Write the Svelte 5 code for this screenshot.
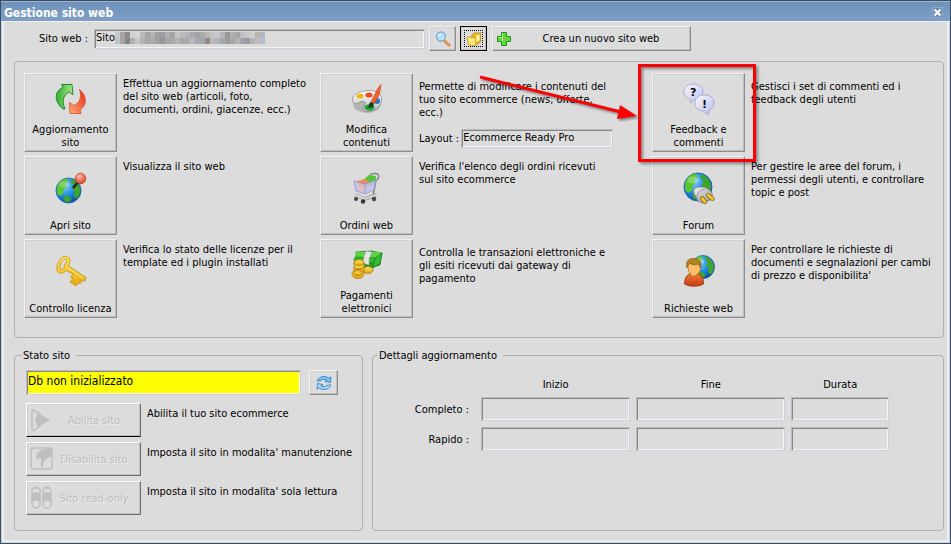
<script lang="ts">
  type Tile = { icon: string; label: string; text: string; low?: boolean; layout?: string; marked?: boolean };

  const tiles: Tile[] = [
    { icon: "sync", label: "Aggiornamento\nsito", text: "Effettua un aggiornamento completo\ndel sito web (articoli, foto,\ndocumenti, ordini, giacenze, ecc.)" },
    { icon: "palette", label: "Modifica\ncontenuti", text: "Permette di modificare i contenuti del\ntuo sito ecommerce (news, offerte,\necc.)", low: true, layout: "Ecommerce Ready Pro" },
    { icon: "chat", label: "Feedback e\ncommenti", text: "Gestisci i set di commenti ed i\nfeedback degli utenti", low: true, marked: true },
    { icon: "pin", label: "Apri sito", text: "Visualizza il sito web" },
    { icon: "cart", label: "Ordini web", text: "Verifica l'elenco degli ordini ricevuti\nsul sito ecommerce" },
    { icon: "plug", label: "Forum", text: "Per gestire le aree del forum, i\npermessi degli utenti, e controllare\ntopic e post" },
    { icon: "key", label: "Controllo licenza", text: "Verifica lo stato delle licenze per il\ntemplate ed i plugin installati" },
    { icon: "money", label: "Pagamenti\nelettronici", text: "Controlla le transazioni elettroniche e\ngli esiti ricevuti dai gateway di\npagamento", low: true },
    { icon: "user", label: "Richieste web", text: "Per controllare le richieste di\ndocumenti e segnalazioni per cambi\ndi prezzo e disponibilita'" },
  ];

  const modes = [
    { icon: "play", label: "Abilita sito", text: "Abilita il tuo sito ecommerce", current: true },
    { icon: "stop", label: "Disabilita sito", text: "Imposta il sito in modalita' manutenzione" },
    { icon: "lights", label: "Sito read-only", text: "Imposta il sito in modalita' sola lettura" },
  ];

  const columns = ["Inizio", "Fine", "Durata"];
  const updates = ["Completo", "Rapido"];

  // two rows of grey cells that hide the address
  const mosaic = [
    "c8c8ce aca49c 8c8c98 d0d0d0 d6d6d6 b8b8bc a4a4a4 b4b4b8 a0a0a0 9c9ca0 b0b0b4 a8a4a0 c4c4c4 bcbcbc b0b4b8 a8a8b0 a0a4a4 acaca8 b8b8b8 c4c4c4 c8c8cc b4b4b8 989898 b0b0b0 a4a8ac c0c0c4 c8c8c8 d0d0d0 b8b4a8 b0b4c4".split(" "),
    "c0c4c8 a8a4a0 84848c b0b0b0 c8c8cc b4b4b4 a4a8b0 b0a8a4 a0a0a0 98989c a4a4a8 a8a8a8 b4b4b8 a8a8a8 acaca4 b8b8c0 a8a8a8 a4a8b0 948c84 b8b8b8 b0b4b8 a8a8a8 9c9ca0 a8a8a8 b4b4b8 a0a4a8 9c9ca4 b4b4b4 c0c0c4 b8bcc4".split(" "),
  ];
</script>

{#snippet globe(cx: number, cy: number, r: number)}
  <g transform="translate({cx} {cy}) scale({r / 12})">
    <circle r="12" fill="url(#sea)" stroke="#1c5fae" stroke-width=".8" />
    <path fill="#5cc62f" d="M-11-4C-9-8-6-11-2-11.500L0-9-3-6-2-3-5-1-5 3-8 5-11 3z" />
    <path fill="#3fa52b" d="M3-11C8-9 11-5 11.400 0L10 5 8 8 5 5 6 1 3-2 5-5 2-8zM-5 6-1 5 3 8 1 11-4 10z" />
    <ellipse cx="-4" cy="-6" rx="5" ry="3" fill="#fff" opacity=".25" />
  </g>
{/snippet}

{#snippet picture(name: string)}
  <svg class="picture" viewBox="0 0 32 32" aria-hidden="true">
    {#if name === "sync"}
      <path fill="url(#leaf)" stroke="#23892a" d="M8 26C-1 19-1 8 8 4.500L6.500 1.500 17 1.500 18 12 14.500 9C9 11 6 17 10 26z" />
      <path fill="url(#ember)" stroke="#d9502c" stroke-width=".8" d="M24.500 6.500C32.500 13 32 22.500 25 27L26 30.500 15 30.500 14.500 19.500 18.500 22.500C25 20 27 14 24.500 6.500z" />
    {:else if name === "palette"}
      <ellipse cx="16" cy="21" rx="14" ry="9" fill="#8d8d8d" opacity=".5" />
      <path fill="url(#paper)" stroke="#8f8f8f" stroke-width=".8" d="M14 8C24 6 31 10 30.500 17 30 25 22 29 15 28.500 10 28 12 24 14 22 16 19 12 17 8 19.500 4 22 1 20 1.500 16 2 11 8 8.500 14 8z" />
      <ellipse cx="9" cy="13" rx="3.500" ry="2.600" fill="#f0b712" />
      <ellipse cx="18" cy="12" rx="3.600" ry="2.500" fill="#ef4b22" />
      <ellipse cx="26" cy="18" rx="3" ry="3" fill="#247ad1" />
      <ellipse cx="18.500" cy="24.500" rx="5" ry="3.200" fill="#21a530" />
      <path fill="#193c20" d="M17 25 19 19 23 20 22 24z" />
      <path fill="#f2622a" stroke="#bd3d14" stroke-width=".6" d="M20 19 27 5 30 1.500 28.500 11 24 20z" />
    {:else if name === "chat"}
      <g fill="url(#lilac)" stroke="#9c9fd0" stroke-width=".8">
        <path d="M10 1C16 1 20 4 20 9 20 13.500 16 16.500 11 16.500L8 20 7 16C3 14.500 1 12 1 9 1 4 5 1 10 1z" />
        <path d="M21 12C27 12 31 15 31 20 31 23 29 26 26 27L25.500 31.500 20 28C15 27.500 12 24 12 20 12 15 16 12 21 12z" />
      </g>
      <text x="7" y="13" class="glyph">?</text>
      <text x="19" y="25" class="glyph">!</text>
    {:else if name === "pin"}
      {@render globe(13.500, 18.500, 12.500)}
      <path stroke="#222" stroke-width="2.500" d="m18 16 6-7" />
      <circle cx="25.500" cy="6.500" r="5.300" fill="url(#ball)" stroke="#b13a22" stroke-width=".7" />
    {:else if name === "cart"}
      <path fill="none" stroke="#858585" stroke-width="1.500" d="m24 9 3-2q2-5-2-5.500Q20 1 19 3M25 8 22 24" />
      <path fill="#55c53b" d="m12 8 6-5 7 1v8l-9 3z" />
      <path fill="#f28b55" d="m6 9 8-2 5 3-3 6-9-2z" />
      <path fill="#c1c2ec" fill-opacity=".85" stroke="#8f91c8" stroke-width=".8" d="m3 9 11 3 11-4-2 10-9 4-9-3z" />
      <path fill="#f5b8a8" fill-opacity=".7" d="m7 12 6 2-1 6-5-2z" />
      <path stroke="#9294ca" stroke-width=".8" d="m14 12v9" fill="none" />
      <path stroke="#8b8b8b" stroke-width="3.500" d="m4 23 10 4 11-4" fill="none" />
      <path stroke="#ddd" stroke-width="2" d="m4 23 10 4 11-4" fill="none" />
      <circle cx="5" cy="27" r="2" fill="#444" /><circle cx="12" cy="29.500" r="2.200" fill="#333" /><circle cx="23" cy="27" r="2.200" fill="#444" />
    {:else if name === "plug"}
      {@render globe(15, 15, 14)}
      <path fill="url(#steel)" stroke="#777" stroke-width=".8" d="M11 22Q9 16 15 15L22 15 28 19Q31 24 27 28L19 31Q14 30 13 25z" />
      <path fill="none" stroke="#888" stroke-width=".8" d="M14 27Q13 19 22 17" />
      <path stroke="#7f610a" stroke-width="4" stroke-linecap="round" d="m19 26 3 4m3-7 4.500 4" />
      <path stroke="#f5cd25" stroke-width="2.600" stroke-linecap="round" d="m19 26 3 4m3-7 4.500 4" />
    {:else if name === "key"}
      <path fill="url(#gold)" fill-rule="evenodd" stroke="#c69009" stroke-width=".8" d="M9 1.500C14 1 16 4 14.500 8L13.500 11 31 22.500 30 26 27 25.500 25 29 23 27.500 21 31 15 27 18 23 15.500 22 18 19 11 15.500C8 19 3 19.500 2 15.500 1 11 4 3 9 1.500zM9 4.500C6 6 4.500 11 5 13.500 6 16 9 13 9.500 11.500L9 10 11.500 7.500C12 5 11 3.500 9 4.500z" />
      <path stroke="#ffef93" d="m13 13 15 10" />
    {:else if name === "money"}
      <path fill="#239d26" stroke="#168319" stroke-width=".7" d="m5 3 15-1 11 2-2 12-9 3-15-4z" />
      <path fill="#5fd145" d="m5 3 25 0-3 6-23-1z" />
      <path fill="#3bb934" stroke="#188d1e" stroke-width=".7" d="m4 8 20 1-2 5-19-2zm20 1 7-5-2 10-7 5z" />
      <path fill="#e5e5e5" stroke="#aaa" stroke-width=".5" d="m15 2 6 1-3 7v6l-6-2 1-6z" />
      <g fill="url(#gold)" stroke="#a87407" stroke-width=".8">
        <ellipse cx="17" cy="21" rx="5" ry="3.500" />
        <path d="M3 14v10h10V14z" /><ellipse cx="8" cy="13.500" rx="5" ry="3" />
        <path d="M3 18q5 4 10 0" />
        <ellipse cx="7" cy="25" rx="6" ry="4.500" /><ellipse cx="7" cy="24" rx="4" ry="2.500" />
      </g>
    {:else if name === "user"}
      {@render globe(20, 12, 11.500)}
      <path fill="url(#shirt)" stroke="#9c3411" stroke-width=".8" d="M1.500 29C1.500 22 5 18 11 18 17 18 21 22 20.500 29 16 32 6 32 1.500 29z" />
      <path fill="#ffbd68" stroke="#ba7126" stroke-width=".8" d="M5 8Q4 18 10 21.500 16 20 17.500 14L17 7z" />
      <path fill="#b18420" stroke="#795711" stroke-width=".6" d="M4 13C2 6 6 3 11 3.500 16 3 19 7 17.500 13L15.500 9Q9 11 7 8 5 10 4 13z" />
    {/if}
  </svg>
{/snippet}

<svg class="defs" aria-hidden="true">
  <defs>
    <radialGradient id="sea" cx=".35" cy=".3" r=".8"><stop stop-color="#8bd0f8" /><stop offset=".5" stop-color="#1e8de0" /><stop offset="1" stop-color="#0b3f96" /></radialGradient>
    <radialGradient id="ball" cx=".4" cy=".3" r=".7"><stop stop-color="#ffc0a5" /><stop offset="1" stop-color="#d84323" /></radialGradient>
    <linearGradient id="leaf"><stop stop-color="#35ad35" /><stop offset="1" stop-color="#a6eb82" /></linearGradient>
    <linearGradient id="ember" x1="1" x2="0" y1="0" y2="1"><stop stop-color="#e22c1b" /><stop offset="1" stop-color="#ffad73" /></linearGradient>
    <linearGradient id="paper" x2="0" y2="1"><stop stop-color="#fff" /><stop offset="1" stop-color="#bbb" /></linearGradient>
    <linearGradient id="steel" x2="1" y2="1"><stop stop-color="#f4f4f4" /><stop offset="1" stop-color="#909090" /></linearGradient>
    <linearGradient id="lilac" x2="1" y2="1"><stop stop-color="#fafaff" /><stop offset="1" stop-color="#b9bdf2" /></linearGradient>
    <linearGradient id="gold" x2="0" y2="1"><stop stop-color="#ffe462" /><stop offset="1" stop-color="#e5a80c" /></linearGradient>
    <linearGradient id="shirt" x2="0" y2="1"><stop stop-color="#f47a38" /><stop offset="1" stop-color="#c43d12" /></linearGradient>
  </defs>
</svg>

<main class="window">
  <header class="titlebar">
    <h1>Gestione sito web</h1>
    <button class="close" aria-label="Chiudi">
      <svg viewBox="0 0 9 9"><path d="m1.500 1.500 6 6m0-6-6 6" /></svg>
    </button>
  </header>

  <div class="content">
    <div class="toolbar">
      <label for="site">Sito web :</label>
      <div class="site">
        <input id="site" class="field" value="Sito" readonly />
        <svg class="mosaic" viewBox="0 0 150 12" aria-hidden="true">
          {#each mosaic as row, y}
            {#each row as color, x}
              <rect x={x * 5} y={y * 6} width="5" height="6" fill="#{color}" />
            {/each}
          {/each}
        </svg>
      </div>
      <button class="raised tool" aria-label="Cerca">
        <svg viewBox="0 0 16 16">
          <path stroke="#d9803a" stroke-width="3" stroke-linecap="round" d="m10 10 4 4" />
          <path stroke="#ffc37e" stroke-linecap="round" d="m10 9.500 4 4" />
          <circle cx="6" cy="5.500" r="4.500" fill="#b8e2fa" stroke="#86a8ca" stroke-width="1.300" />
          <path fill="none" stroke="#fff" d="M3.500 5Q4 3 6 3" />
        </svg>
      </button>
      <button class="raised tool focused" aria-label="Apri cartella">
        <svg viewBox="0 0 16 16">
          <path fill="#f0bd25" stroke="#b5820d" stroke-width=".8" d="M6 4 9 1.500 11 2.500 14.500 1.500V11L9 14.500 5 13z" />
          <path fill="#ffe778" stroke="#c49115" stroke-width=".8" d="M1 6.500 4 5.500 5.500 7 9.500 6 10 13 8.500 15 2.500 14z" />
          <path fill="#fff3a8" d="m10 5 3.500-2v6L10.500 11z" />
        </svg>
      </button>
      <button class="raised create">
        <svg viewBox="0 0 16 16"><path fill="#62d63c" stroke="#21951b" d="M5.500 1.500h5v4h4v5h-4v4h-5v-4h-4v-5h4z" /><path stroke="#b2f391" fill="none" d="M6.500 10V2.500M2.500 6.500H6" /></svg>
        <span>Crea un nuovo sito web</span>
      </button>
    </div>

    <section class="panel tiles">
      {#each tiles as tile}
        <div class="tile" class:marked={tile.marked}>
          <button class="raised big">
            <span class="art">{@render picture(tile.icon)}</span>
            <span class="caption">{tile.label}</span>
          </button>
          <div class="about" class:low={tile.low}>
            <p>{tile.text}</p>
            {#if tile.layout}
              <div class="layout">
                <label for="layout">Layout :</label>
                <input id="layout" class="field" value={tile.layout} readonly />
              </div>
            {/if}
          </div>
          {#if tile.marked}
            <div class="marker"></div>
            <svg class="arrow" viewBox="0 0 166 56" aria-hidden="true">
              <path d="M4 6 145 41" stroke="#f00" stroke-width="3" />
              <path d="M144 34 161 45 141 48z" fill="#f00" />
            </svg>
          {/if}
        </div>
      {/each}
    </section>

    <div class="bottom">
      <fieldset class="panel state">
        <legend>Stato sito</legend>
        <div class="status">
          <input class="field db" value="Db non inizializzato" aria-label="Stato" readonly />
          <button class="raised refresh" aria-label="Aggiorna stato">
            <svg viewBox="0 0 16 16">
              <path fill="#7cc2f4" stroke="#2476c4" stroke-width=".8" d="M1 6Q3 1.500 8 1.500 11 1.500 12.500 3L15 2 14.500 7.500 9 6.500 11 5Q7 3 4 6z" />
              <path fill="#a8d9fa" stroke="#2476c4" stroke-width=".8" d="M15 10Q13 14.500 8 14.500 5 14.500 3.500 13L1 14 1.500 8.500 7 9.500 5 11Q9 13 12 10z" />
            </svg>
          </button>
        </div>
        {#each modes as mode}
          <div class="mode">
            <button class="raised toggle" class:current={mode.current} disabled>
              <svg viewBox="0 0 24 24" aria-hidden="true">
                {#if mode.icon === "play"}
                  <path class="line" d="M3 1.500Q2 2 2 4V20Q2 23 4 22.500L10 18M3 1.500 10 6" /><path class="solid" d="M8 5 20 12 8 19 5 12z" />
                {:else if mode.icon === "stop"}
                  <rect class="line" x="1" y="1" width="21" height="21" rx="3" /><path class="solid" d="M22 2H13Q5 5 6 13 10 10 12 12 9 18 13 21 12 12 22 9z" />
                {:else}
                  <rect class="line" x="2" y="1" width="8" height="21" rx="4" /><rect class="line" x="13" y="1" width="8" height="21" rx="4" />
                  <path class="solid" d="M2 8Q6 4 10 8V16Q6 13 2 16zM13 8q4-4 8 0v8q-4-3-8 0zM3 3q3-3 6 0zM14 3q3-3 6 0z" />
                {/if}
              </svg>
              <span>{mode.label}</span>
            </button>
            <p>{mode.text}</p>
          </div>
        {/each}
      </fieldset>

      <fieldset class="panel details">
        <legend>Dettagli aggiornamento</legend>
        <div class="times">
          <span></span>
          {#each columns as column}
            <span class="head">{column}</span>
          {/each}
          {#each updates as update}
            <label for="{update}-Inizio">{update} :</label>
            {#each columns as column}
              <input id="{update}-{column}" class="field time" aria-label="{update} {column}" readonly />
            {/each}
          {/each}
        </div>
      </fieldset>
    </div>
  </div>
</main>

<style>
  :global(body) { margin: 0; background: #dcdcdc; }
  .window { box-sizing: border-box; min-height: 100vh; border: 1px solid #3d4c62; box-shadow: inset 0 0 0 1px #c3d3e6, inset 0 0 0 3px #ededed; background: #dcdcdc; color: #000; font: 11px/13px Tahoma, "DejaVu Sans Condensed", "Noto Sans", sans-serif; }
  .defs { position: absolute; width: 0; height: 0; }
  h1, p { margin: 0; font: inherit; }
  button, input { box-sizing: border-box; margin: 0; padding: 0; border-radius: 0; color: inherit; font: inherit; }
  svg { flex: none; }

  .titlebar { display: flex; align-items: center; justify-content: space-between; box-sizing: border-box; height: 21px; padding: 2px 7px 0 3px; border-top: 1px solid #9db5d2; border-bottom: 1px solid #f0f0f0; background: linear-gradient(#6d92ba, #7e9fc6); }
  h1 { color: #fff; font-size: 12px; line-height: 16px; font-weight: bold; }
  .close { width: 11px; height: 11px; border: 1px solid #8cabc9; background: #6d8fb2; }
  .close svg { display: block; width: 9px; height: 9px; }
  .close path { stroke: #fff; stroke-width: 2; }

  .content { padding: 4px 6px 12px 13px; }
  .raised { border: 1px solid; border-color: #f2f2f2 #8c8c8c #8c8c8c #f2f2f2; background: #dcdcdc; box-shadow: inset -1px -1px #bfbfbf, inset 1px 1px #cfcfd6; }
  .field { width: 100%; min-width: 0; border: 1px solid; border-color: #bababa #d0d0d8 #d0d0d8 #bababa; background: #dcdcdc; box-shadow: inset 1px 1px #888, inset -1px -1px #f4f4f4; outline: none; }
  .panel { min-width: 0; margin: 0; border: 1px solid #b0b0b0; border-radius: 4px; }

  .toolbar { display: flex; align-items: center; margin-right: 253px; }
  .toolbar label { width: 74px; padding-right: 6px; text-align: right; }
  .site { position: relative; flex: 1; }
  .site .field { display: block; height: 20px; padding: 0 1px 2px; }
  .mosaic { position: absolute; top: 3px; left: 21px; width: 150px; height: 12px; }
  .tool { display: flex; align-items: center; justify-content: center; width: 27px; height: 25px; margin-left: 4px; }
  .tool svg { width: 16px; height: 16px; }
  .focused { border-color: #100000; outline: 1px dotted #000; outline-offset: -5px; }
  .create { display: flex; align-items: center; width: 199px; height: 25px; margin-left: 5px; padding-left: 3px; }
  .create svg { width: 16px; height: 16px; }
  .create span { flex: 1; text-align: center; }

  .tiles { display: grid; grid-template-columns: 296fr 332fr 282fr; gap: 4px 0; margin-top: 10px; padding: 11px 9px 19px; }
  .tile { position: relative; display: flex; gap: 6px; min-width: 0; }
  .tile.marked { z-index: 1; }
  .big { display: flex; flex: none; flex-direction: column; align-items: center; width: 93px; height: 79px; padding-bottom: 2px; }
  .art { display: flex; flex: 1; align-items: center; }
  .picture { width: 32px; height: 32px; }
  .glyph { font: bold 11px "DejaVu Sans", sans-serif; }
  .caption, .about p { white-space: pre; }
  .about { padding-top: 4px; }
  .about.low { padding-top: 7px; }
  .layout { display: flex; align-items: center; gap: 2px; margin-top: 10px; }
  .layout label { white-space: nowrap; }
  .layout .field { width: 152px; height: 19px; padding: 0 1px 2px; }

  .marker { position: absolute; top: -9px; left: -14px; width: 112px; height: 92px; border: 3px solid #f00; box-shadow: 2px 2px 3px #0006, inset 2px 2px 3px #0006; pointer-events: none; }
  .arrow { position: absolute; top: -2px; left: -176px; width: 166px; height: 56px; filter: drop-shadow(2px 2px 1px #0006); pointer-events: none; }

  .bottom { display: grid; grid-template-columns: 349fr 572fr; gap: 9px; margin-top: 11px; }
  legend { padding: 0 6px 0 1px; }
  .state { display: flex; flex-direction: column; padding: 8px 10px 15px 11px; }
  .state legend, .details legend { margin-left: -4px; }
  .status { display: flex; gap: 8px; margin: 0 14px 8px 0; }
  .db { height: 25px; padding: 0 1px 3px; background: #ff0; font-size: 12px; }
  .refresh { display: flex; flex: none; align-items: center; justify-content: center; width: 29px; height: 25px; }
  .refresh svg { width: 16px; height: 16px; }
  .mode { display: flex; gap: 6px; margin-bottom: 5px; }
  .mode:last-child { margin-bottom: 0; }
  .mode p { padding-top: 4px; white-space: nowrap; }
  .toggle { display: flex; flex: none; align-items: center; width: 115px; height: 34px; padding: 0 6px 0 3px; border-color: #fff #707070 #707070 #fff; color: #bcbcbc; text-shadow: 1px 1px #eee; }
  .toggle.current { border-bottom-color: #000; }
  .toggle svg { width: 24px; height: 24px; }
  .toggle span { flex: 1; text-align: center; white-space: nowrap; }
  .line { fill: none; stroke: #bfbfbf; stroke-width: 1.5; }
  .solid { fill: #bfbfbf; }

  .details { padding: 16px 54px 20px 9px; }
  .times { display: grid; grid-template-columns: 93px 150fr 150fr 98fr; gap: 6px; align-items: center; }
  .times label { padding-right: 6px; text-align: right; }
  .head { text-align: center; }
  .time { height: 24px; }
</style>
